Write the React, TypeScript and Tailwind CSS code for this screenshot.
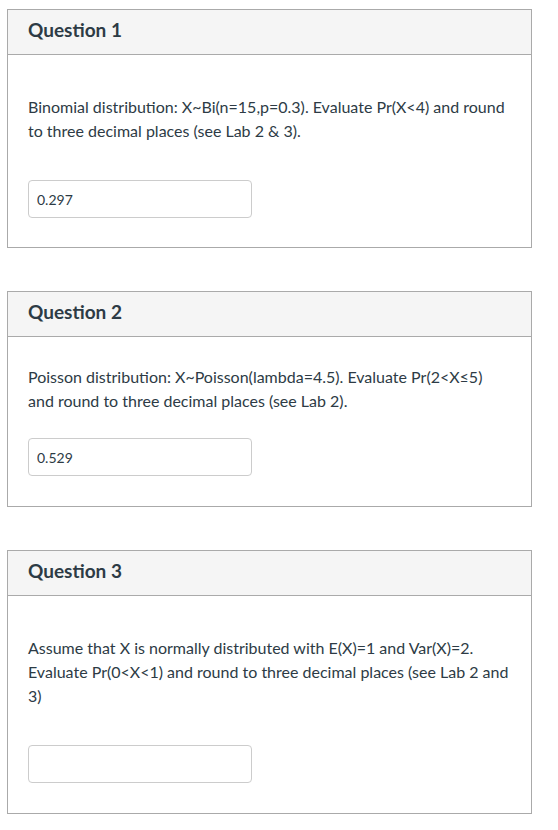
type Question = {
  title: string;
  text: string;
  answer: string;
  bodyPad: string;
  gap: string;
};

const questions: Question[] = [
  {
    title: 'Question 1',
    text: 'Binomial distribution: X~Bi(n=15,p=0.3). Evaluate Pr(X<4) and round to three decimal places (see Lab 2 & 3).',
    answer: '0.297',
    bodyPad: 'pt-[40px] pb-[29px]',
    gap: 'mt-[37px]',
  },
  {
    title: 'Question 2',
    text: 'Poisson distribution: X~Poisson(lambda=4.5). Evaluate Pr(2<X≤5) and round to three decimal places (see Lab 2).',
    answer: '0.529',
    bodyPad: 'pt-[28px] pb-[30px]',
    gap: 'mt-[25px]',
  },
  {
    title: 'Question 3',
    text: 'Assume that X is normally distributed with E(X)=1 and Var(X)=2. Evaluate Pr(0<X<1) and round to three decimal places (see Lab 2 and 3)',
    answer: '',
    bodyPad: 'pt-[40px] pb-[30px]',
    gap: 'mt-[37px]',
  },
];

const QuestionCard = ({ title, text, answer, bodyPad, gap }: Question) => {
  return (
    <div className="w-[525px] border border-[#aaaaaa] bg-white">
      <div className="h-[45px] border-b border-[#aaaaaa] bg-[#f5f5f5] px-[20px] pt-[8px]">
        <h2 className="text-[19px] leading-[24px] font-bold text-[#2d3b45]">{title}</h2>
      </div>
      <div className={`px-[20px] ${bodyPad}`}>
        <p className="text-[16px] leading-[24px] text-[#2d3b45]">{text}</p>
        <input
          className={`${gap} block h-[38px] w-[224px] rounded-[4px] border border-[#cccccc] bg-white px-[8px] text-[14px] text-[#2d3b45] outline-none`}
          defaultValue={answer}
          readOnly
        />
      </div>
    </div>
  );
};

export default function App() {
  return (
    <div className="min-h-[830px] w-[558px] bg-white px-[7px] pt-[9px] font-['Lato',sans-serif]">
      <div className="flex flex-col gap-[43px]">
        {questions.map((q) => (
          <QuestionCard key={q.title} {...q} />
        ))}
      </div>
    </div>
  );
}
